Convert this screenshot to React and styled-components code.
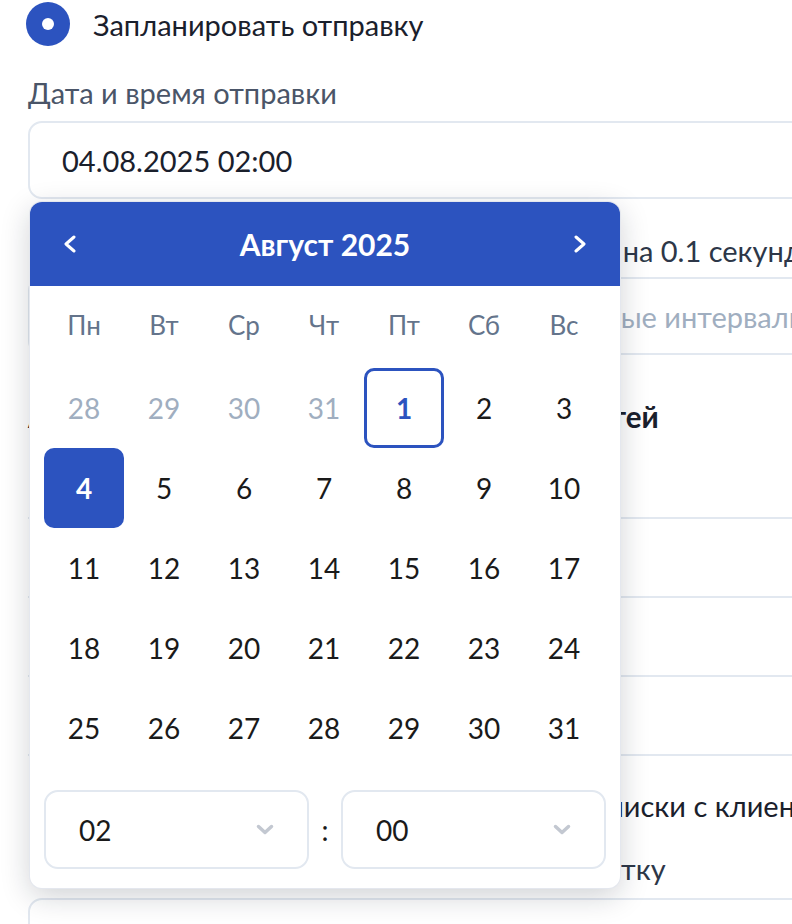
import styled, { createGlobalStyle } from "styled-components";

const GlobalStyle = createGlobalStyle`
  html, body {
    margin: 0;
    padding: 0;
    background: #fff;
    overflow: hidden;
  }
  body {
    font-family: "Lato", "Noto Sans", sans-serif;
    color: #1a202c;
  }
`;

const Page = styled.div`
  width: 1000px;
  padding-left: 28px;
  box-sizing: border-box;
`;

const RadioRow = styled.label`
  display: flex;
  align-items: center;
  gap: 23px;
  height: 48px;
  margin-left: -2px;
  font-size: 29px;
  color: #1a202c;
`;

const RadioDot = styled.span`
  width: 44px;
  height: 44px;
  border-radius: 50%;
  background: #2c53bf;
  display: flex;
  align-items: center;
  justify-content: center;

  &::after {
    content: "";
    width: 12px;
    height: 12px;
    border-radius: 50%;
    background: #fff;
  }
`;

const FieldLabel = styled.div`
  font-size: 29px;
  line-height: 36px;
  white-space: nowrap;
  color: ${(p) => (p.$dark ? "#2d3748" : "#4a5568")};
  margin: ${(p) => p.$top}px 0 ${(p) => p.$bottom ?? 10}px;
`;

const Heading = styled.div`
  font-size: 29.5px;
  line-height: 36px;
  font-weight: 700;
  white-space: nowrap;
  margin-top: 44px;
`;

const Field = styled.div`
  position: relative;
`;

const InputBox = styled.div`
  height: 78px;
  box-sizing: border-box;
  border: 2px solid #e2e8f0;
  border-radius: 14px;
  padding: 0 32px;
  display: flex;
  align-items: center;
  font-size: 29px;
  white-space: nowrap;
  color: ${(p) => (p.$placeholder ? "#a0aec0" : "#1a202c")};
`;

const List = styled.div`
  margin-top: 82px;
  border-bottom: 2px solid #e2e8f0;
`;

const ListRow = styled.div`
  height: 79px;
  box-sizing: border-box;
  border-top: 2px solid #e2e8f0;
`;

const CheckText = styled.div`
  margin-top: 32px;
  font-size: 29px;
  line-height: 36px;
  white-space: nowrap;
  color: #1a202c;
`;

/* календарь */

const Calendar = styled.div`
  position: absolute;
  top: calc(100% + 3px);
  left: 2px;
  width: 590px;
  background: #fff;
  border-radius: 12px;
  overflow: hidden;
  z-index: 5;
  box-shadow: 0 0 0 1px #e4e7ee, 0 8px 30px rgba(15, 23, 42, 0.2);
`;

const CalHeader = styled.div`
  height: 84px;
  background: #2c53bf;
  color: #fff;
  display: flex;
  align-items: center;
  justify-content: space-between;
  padding: 0 26px;
`;

const NavButton = styled.button`
  width: 28px;
  height: 28px;
  padding: 0;
  border: none;
  background: none;
  display: flex;
  align-items: center;
  justify-content: center;
  cursor: pointer;
`;

const MonthTitle = styled.div`
  font-size: 30px;
  font-weight: 700;
`;

const CalBody = styled.div`
  padding: 0 14px 19px;
`;

const WeekRow = styled.div`
  display: grid;
  grid-template-columns: repeat(7, 80px);
  height: 78px;
  align-items: center;
`;

const WeekDay = styled.div`
  text-align: center;
  font-size: 26px;
  color: #64748b;
`;

const DaysGrid = styled.div`
  display: grid;
  grid-template-columns: repeat(7, 80px);
  grid-auto-rows: 80px;
  padding-top: 4px;
`;

const Day = styled.div`
  display: flex;
  align-items: center;
  justify-content: center;
  box-sizing: border-box;
  border-radius: 10px;
  font-size: 28px;
  color: ${(p) =>
    p.$selected ? "#fff" : p.$today ? "#2c53bf" : p.$muted ? "#a0aec0" : "#1a1a1a"};
  background: ${(p) => (p.$selected ? "#2c53bf" : "transparent")};
  border: ${(p) => (p.$today ? "3px solid #2c53bf" : "none")};
  font-weight: ${(p) => (p.$selected || p.$today ? 700 : 400)};
`;

const TimeRow = styled.div`
  margin-top: 22px;
  display: grid;
  grid-template-columns: 1fr 32px 1fr;
  align-items: center;
  width: 562px;
`;

const TimeSelect = styled.div`
  height: 79px;
  box-sizing: border-box;
  border: 2px solid #e2e8f0;
  border-radius: 14px;
  padding: 0 33px;
  display: flex;
  align-items: center;
  justify-content: space-between;
  font-size: 28px;
  color: #1a1a1a;
`;

const Colon = styled.div`
  text-align: center;
  font-size: 28px;
  color: #1a1a1a;
`;

const Chevron = ({ dir }) => {
  const pts = dir === "left" ? "11,2 3,9 11,16" : "3,2 11,9 3,16";
  return (
    <svg width="14" height="18" viewBox="0 0 14 18">
      <polyline
        points={pts}
        fill="none"
        stroke="#fff"
        strokeWidth="3"
        strokeLinecap="round"
        strokeLinejoin="round"
      />
    </svg>
  );
};

const ChevronDown = () => (
  <svg width="18" height="11" viewBox="0 0 18 11">
    <polyline
      points="2.5,2.5 9,8.5 15.5,2.5"
      fill="none"
      stroke="#c3c8d1"
      strokeWidth="3.5"
      strokeLinecap="round"
      strokeLinejoin="round"
    />
  </svg>
);

const weekDays = ["Пн", "Вт", "Ср", "Чт", "Пт", "Сб", "Вс"];

const days = [
  ...[28, 29, 30, 31].map((d) => ({ d, muted: true })),
  ...Array.from({ length: 31 }, (_, i) => ({ d: i + 1 })),
];

function App() {
  return (
    <>
      <GlobalStyle />
      <Page>
        <RadioRow>
          <RadioDot />
          Запланировать отправку
        </RadioRow>

        <FieldLabel $top={27}>Дата и время отправки</FieldLabel>
        <Field>
          <InputBox>04.08.2025 02:00</InputBox>
          <Calendar>
            <CalHeader>
              <NavButton>
                <Chevron dir="left" />
              </NavButton>
              <MonthTitle>Август 2025</MonthTitle>
              <NavButton>
                <Chevron dir="right" />
              </NavButton>
            </CalHeader>
            <CalBody>
              <WeekRow>
                {weekDays.map((w) => (
                  <WeekDay key={w}>{w}</WeekDay>
                ))}
              </WeekRow>
              <DaysGrid>
                {days.map((item, i) => (
                  <Day
                    key={i}
                    $muted={item.muted}
                    $today={!item.muted && item.d === 1}
                    $selected={!item.muted && item.d === 4}
                  >
                    {item.d}
                  </Day>
                ))}
              </DaysGrid>
              <TimeRow>
                <TimeSelect>
                  02
                  <ChevronDown />
                </TimeSelect>
                <Colon>:</Colon>
                <TimeSelect>
                  00
                  <ChevronDown />
                </TimeSelect>
              </TimeRow>
            </CalBody>
          </Calendar>
        </Field>

        <FieldLabel $top={34} $bottom={8} $dark>
          Пауза между сообщениями, не меньше чем на 0.1 секунду
        </FieldLabel>
        <InputBox $placeholder>
          Например: 0.5 секунды, 1.25 или случайные интервалы
        </InputBox>

        <Heading>Аккаунты мессенджеров и социальных сетей</Heading>

        <List>
          <ListRow />
          <ListRow />
          <ListRow />
        </List>

        <CheckText>Приостанавливать рассылку во время переписки с клиентом</CheckText>
        <FieldLabel $top={27} $bottom={11} $dark>
          При отправке автоматически проставить метку
        </FieldLabel>
        <InputBox />
      </Page>
    </>
  );
}

export default App;
